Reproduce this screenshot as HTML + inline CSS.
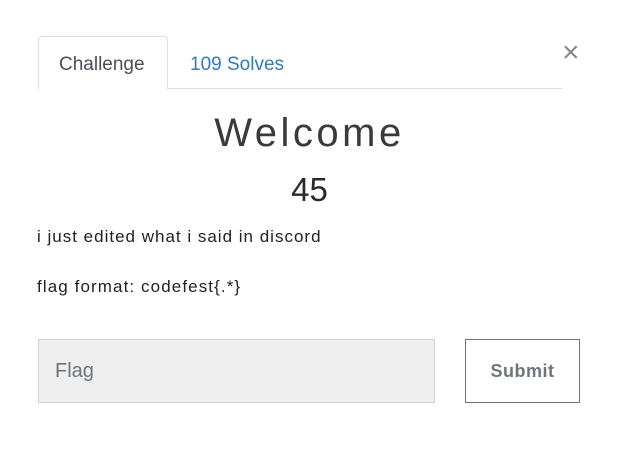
<!DOCTYPE html>
<html><head><style>
body{margin:0;width:619px;height:457px;background:#fff;font-family:"Liberation Sans",sans-serif;position:relative;overflow:hidden}
.a{position:absolute;white-space:nowrap}
</style></head><body>
<div class="a" style="left:38px;top:88px;width:525px;height:1px;background:#dee2e6"></div>
<div class="a" style="left:38px;top:36px;width:130px;height:53px;border:1px solid #dee2e6;border-bottom:none;border-radius:4px 4px 0 0;background:#fff;box-sizing:border-box"></div>
<div class="a" style="left:59px;top:54px;font-size:19px;color:#495057">Challenge</div>
<div class="a" style="left:190px;top:54px;font-size:19px;color:#337ab7">109 Solves</div>
<div class="a" style="left:562px;top:36px;font-size:30px;color:#888">×</div>
<div class="a" style="left:0;width:619px;text-align:center;top:111px;font-size:40px;font-weight:300;letter-spacing:3.5px;color:#3a3a3a">Welcome</div>
<div class="a" style="left:0;width:619px;text-align:center;top:171px;font-size:33px;color:#2a2a2a">45</div>
<div class="a" style="left:37px;top:227px;font-size:17px;color:#222;letter-spacing:1px">i just edited what i said in discord</div>
<div class="a" style="left:37px;top:277px;font-size:17px;color:#222;letter-spacing:1.1px">flag format: codefest{.*}</div>
<div class="a" style="left:38px;top:339px;width:397px;height:64px;background:#efefef;border:1px solid #ced4da;box-sizing:border-box"></div>
<div class="a" style="left:55px;top:360px;font-size:20px;color:#6c757d">Flag</div>
<div class="a" style="left:465px;top:339px;width:115px;height:64px;border:1px solid #6c757d;box-sizing:border-box;text-align:center;line-height:62px;font-size:18px;font-weight:bold;color:#6c757d;letter-spacing:0.5px">Submit</div>
</body></html>
